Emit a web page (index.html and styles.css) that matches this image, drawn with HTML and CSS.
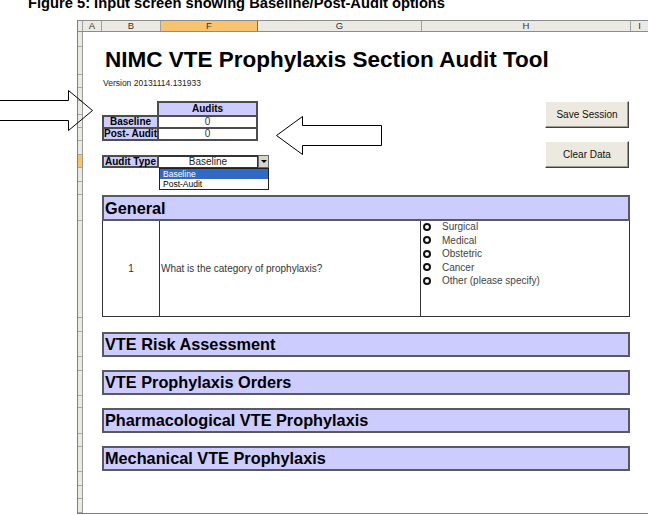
FILE: index.html
```html
<!DOCTYPE html>
<html lang="en">
<head>
    <meta charset="UTF-8">
    <title>NIMC VTE Prophylaxis Section Audit Tool</title>
    <link rel="stylesheet" href="styles.css">
</head>
<body>
<p class="caption">Figure 5: Input screen showing Baseline/Post-Audit options</p>

<div class="sheet">
    <!-- column letters -->
    <div class="col-heads">
        <span class="c-corner"></span>
        <span class="c-a">A</span>
        <span class="c-b">B</span>
        <span class="c-f active">F</span>
        <span class="c-g">G</span>
        <span class="c-h">H</span>
        <span class="c-i">I</span>
    </div>

    <div class="sheet-body">
        <!-- row numbers strip (too narrow to show the numbers) -->
        <div class="row-heads">
            <div class="h15"></div>
            <div class="h28"></div>
            <div class="h13"></div>
            <div class="h13"></div>
            <div class="h14"></div>
            <div class="h13"></div>
            <div class="h13"></div>
            <div class="h14"></div>
            <div class="h13 active"></div>
            <div class="h14"></div>
            <div class="h13"></div>
            <div class="h26"></div>
            <div class="h97"></div>
            <div class="h14"></div>
            <div class="h25"></div>
            <div class="h14"></div>
            <div class="h25"></div>
            <div class="h12"></div>
            <div class="h26"></div>
            <div class="h13"></div>
            <div class="h25"></div>
            <div class="h14"></div>
            <div class="h13"></div>
            <div class="h14"></div>
        </div>

        <div class="canvas">
            <h1 class="title">NIMC VTE Prophylaxis Section Audit Tool</h1>
            <div class="version">Version 20131114.131933</div>

            <div class="controls">
                <div class="audit-setup">
                    <div class="audits-head">Audits</div>
                    <div class="audits-grid">
                        <div class="label">Baseline</div>
                        <div class="value">0</div>
                        <div class="label">Post- Audit</div>
                        <div class="value">0</div>
                    </div>

                    <div class="audit-type">
                        <div class="type-label">Audit Type</div>
                        <div class="select">
                            <div class="select-value">Baseline</div>
                            <div class="select-btn"></div>
                            <ul class="select-menu">
                                <li class="selected">Baseline</li>
                                <li>Post-Audit</li>
                            </ul>
                        </div>
                    </div>
                </div>

                <div class="actions">
                    <button class="btn">Save Session</button>
                    <button class="btn">Clear Data</button>
                </div>
            </div>

            <div class="section-bar general">General</div>
            <div class="question">
                <div class="q-num">1</div>
                <div class="q-text">What is the category of prophylaxis?</div>
                <ul class="q-options">
                    <li><span class="radio"></span>Surgical</li>
                    <li><span class="radio"></span>Medical</li>
                    <li><span class="radio"></span>Obstetric</li>
                    <li><span class="radio"></span>Cancer</li>
                    <li><span class="radio"></span>Other (please specify)</li>
                </ul>
            </div>

            <div class="sections">
                <div class="section-bar">VTE Risk Assessment</div>
                <div class="section-bar">VTE Prophylaxis Orders</div>
                <div class="section-bar">Pharmacological VTE Prophylaxis</div>
                <div class="section-bar">Mechanical VTE Prophylaxis</div>
            </div>
        </div>
    </div>
</div>

<!-- call-out arrows drawn over the sheet -->
<svg class="callouts" width="648" height="515" viewBox="0 0 648 515">
    <polygon points="-2,100.5 68.5,100.5 68.5,90.5 92.5,110.5 68.5,130.5 68.5,120.5 -2,120.5"/>
    <polygon points="381.5,125.5 302.5,125.5 302.5,116.5 276.5,135.5 302.5,154.5 302.5,145.5 381.5,145.5"/>
</svg>
</body>
</html>
```

FILE: styles.css
```css
* {
    box-sizing: border-box;
}

body {
    margin: 0;
    width: 648px;
    height: 515px;
    overflow: hidden;
    position: relative;
    background: #fff;
    color: #000;
    font-family: "Liberation Sans", Arial, sans-serif;
}

.caption {
    margin: -4px 0 10px;
    padding-left: 28px;
    height: 14px;
    font-size: 14.7px;
    font-weight: bold;
    line-height: 14px;
    white-space: nowrap;
}

/* spreadsheet frame */
.sheet {
    margin-left: 77px;
    height: 494px;
    border-left: 1px solid #7f7f7f;
    border-bottom: 1px solid #7f7f7f;
}

.col-heads {
    display: flex;
    height: 12px;
    background: #ebeae2;
    border-top: 1px solid #8c8c8c;
    border-bottom: 1px solid #8c8c8c;
}

.col-heads span {
    flex: none;
    border-right: 1px solid #a0a0a0;
    text-align: center;
    font-size: 9.5px;
    line-height: 10px;
    color: #333;
}

.col-heads .active {
    background: #f8c36c;
    border-right-color: #8a6a3a;
}

.c-corner { width: 5px; }
.c-a { width: 19px; }
.c-b { width: 59px; }
.c-f { width: 97px; }
.c-g { width: 164px; }
.c-h { width: 209px; }
.c-i { flex: 1 !important; border-right: 0 !important; }

.sheet-body {
    display: flex;
    height: 481px;
}

.row-heads {
    flex: none;
    width: 5px;
    display: flex;
    flex-direction: column;
    background: #ebeae2;
    border-right: 1px solid #9a9a9a;
}

.row-heads div {
    flex: none;
    border-bottom: 1px solid #a8a8a8;
}

.row-heads .active {
    background: #f8c36c;
}

.h12 { height: 12px; }
.h13 { height: 13px; }
.h14 { height: 14px; }
.h15 { height: 15px; }
.h25 { height: 25px; }
.h26 { height: 26px; }
.h28 { height: 28px; }
.h97 { height: 97px; }

.canvas {
    flex: 1;
    padding: 0 18px 0 19px;
}

.title {
    margin: 17px 0 0 3px;
    font-size: 22.5px;
    line-height: 22px;
    font-weight: bold;
    white-space: nowrap;
}

.version {
    margin: 7px 0 0 1px;
    font-size: 8.5px;
    line-height: 10px;
    color: #222;
}

/* audits counter, audit type and buttons */
.controls {
    display: flex;
    justify-content: space-between;
    align-items: flex-start;
    margin-top: 13px;
}

.audits-head {
    margin-left: 55px;
    width: 101px;
    height: 14px;
    border: 2px solid #4d4d4d;
    border-bottom: 0;
    background: #ccf;
    text-align: center;
    font-size: 10px;
    font-weight: bold;
    line-height: 12px;
}

.audits-grid {
    display: grid;
    grid-template-columns: 53px 97px;
    grid-auto-rows: 10px;
    gap: 2px;
    width: 156px;
    padding: 2px;
    background: #4d4d4d;
    font-size: 10px;
    line-height: 10px;
    text-align: center;
}

.audits-grid .label {
    background: #ccf;
    font-weight: bold;
}

.audits-grid .value {
    background: #fff;
    color: #333;
}

.audit-type {
    display: flex;
    margin-top: 14px;
    height: 13px;
}

.type-label {
    width: 57px;
    border: 2px solid #4d4d4d;
    background: #ccf;
    font-size: 10px;
    font-weight: bold;
    line-height: 9px;
    text-align: center;
    white-space: nowrap;
}

.select {
    position: relative;
    display: flex;
    width: 110px;
}

.select-value {
    flex: 1;
    border: 1px solid #333;
    border-top-width: 2px;
    border-left-width: 0;
    background: #fff;
    text-align: center;
    font-size: 10px;
    line-height: 10px;
    color: #222;
}

.select-btn {
    position: relative;
    width: 11px;
    background: #d8d5cc;
    border: 1px solid #666;
}

.select-btn::after {
    content: "";
    position: absolute;
    left: 2px;
    top: 4px;
    border-left: 3px solid transparent;
    border-right: 3px solid transparent;
    border-top: 3px solid #000;
}

.select-menu {
    position: absolute;
    top: 13px;
    left: 0;
    width: 110px;
    margin: 0;
    padding: 0;
    list-style: none;
    background: #fff;
    border: 1px solid #222;
    font-size: 8.5px;
    line-height: 10px;
}

.select-menu li {
    padding-left: 3px;
}

.select-menu .selected {
    background: #316ac5;
    color: #fff;
}

.actions {
    display: flex;
    flex-direction: column;
    gap: 13px;
    margin-right: 1px;
}

.btn {
    width: 84px;
    height: 27px;
    padding: 0;
    background: #ece9e0;
    border: 1px solid;
    border-color: #fff #404040 #404040 #fff;
    box-shadow: inset -1px -1px #9d9a8f;
    font-family: inherit;
    font-size: 10px;
    color: #111;
}

/* sections */
.section-bar {
    display: flex;
    align-items: center;
    height: 25px;
    padding-left: 1px;
    background: #ccf;
    border: 2px solid #585866;
    font-size: 16.3px;
    font-weight: bold;
}

.section-bar.general {
    height: 26px;
    margin-top: 27px;
}

.question {
    display: grid;
    grid-template-columns: 57px 261px 1fr;
    height: 96px;
    border: 1px solid #333;
    border-top: 0;
    font-size: 10px;
    color: #333;
}

.q-num,
.q-text {
    display: flex;
    align-items: center;
    border-right: 1px solid #333;
}

.q-num {
    justify-content: center;
}

.q-text {
    padding-left: 1px;
}

.q-options {
    margin: -1px 0 0;
    padding: 0;
    list-style: none;
    line-height: 13.5px;
    color: #444;
}

.q-options li {
    display: flex;
    align-items: center;
}

.radio {
    flex: none;
    width: 8px;
    height: 8px;
    margin: 0 11px 0 2px;
    border: 2px solid #111;
    border-radius: 50%;
}

.sections {
    display: flex;
    flex-direction: column;
    gap: 13px;
    margin-top: 15px;
}

.callouts {
    position: absolute;
    top: 0;
    left: 0;
    pointer-events: none;
}

.callouts polygon {
    fill: none;
    stroke: #000;
    stroke-width: 1;
}
```
